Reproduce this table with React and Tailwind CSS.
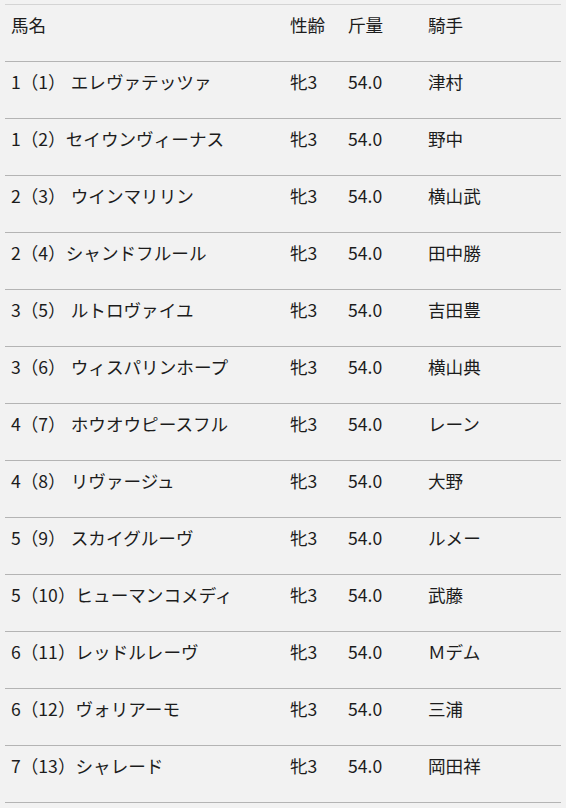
import React from "react";

const rows = [
  ["1（1）", true, "エレヴァテッツァ", "津村"],
  ["1（2）", false, "セイウンヴィーナス", "野中"],
  ["2（3）", true, "ウインマリリン", "横山武"],
  ["2（4）", false, "シャンドフルール", "田中勝"],
  ["3（5）", true, "ルトロヴァイユ", "吉田豊"],
  ["3（6）", true, "ウィスパリンホープ", "横山典"],
  ["4（7）", true, "ホウオウピースフル", "レーン"],
  ["4（8）", true, "リヴァージュ", "大野"],
  ["5（9）", true, "スカイグルーヴ", "ルメー"],
  ["5（10）", false, "ヒューマンコメディ", "武藤"],
  ["6（11）", false, "レッドルレーヴ", "Ｍデム"],
  ["6（12）", false, "ヴォリアーモ", "三浦"],
  ["7（13）", false, "シャレード", "岡田祥"],
];

function Row({ name, c2, c3, c4, header }) {
  return (
    <div
      className={
        "flex border-b border-[#b4b4b4] pt-[8px] text-[17.6px] leading-6 " +
        (header ? "h-[58px] border-t border-t-[#d4d4d4]" : "h-[57px]")
      }
    >
      <div className="w-[279px] pl-[6px] whitespace-nowrap">{name}</div>
      <div className="w-[58px] pl-[6px]">{c2}</div>
      <div className="w-[80px] pl-[6px]">{c3}</div>
      <div className="flex-1 pl-[6px]">{c4}</div>
    </div>
  );
}

export default function App() {
  return (
    <div
      className="min-h-[808px] w-[566px] bg-[#f2f2f2] pt-[4px] px-[5px] text-[#1c1c1c]"
      style={{ fontFamily: '"Noto Sans CJK JP", "Noto Sans", sans-serif' }}
    >
      <div className="w-[556px]">
        <Row header name="馬名" c2="性齢" c3="斤量" c4="騎手" />
        {rows.map((r, i) => (
          <Row
            key={i}
            name={
              <>
                {r[0]}
                <span className={r[1] ? "ml-[5px]" : ""}>{r[2]}</span>
              </>
            }
            c2="牝3"
            c3="54.0"
            c4={r[3]}
          />
        ))}
      </div>
    </div>
  );
}
